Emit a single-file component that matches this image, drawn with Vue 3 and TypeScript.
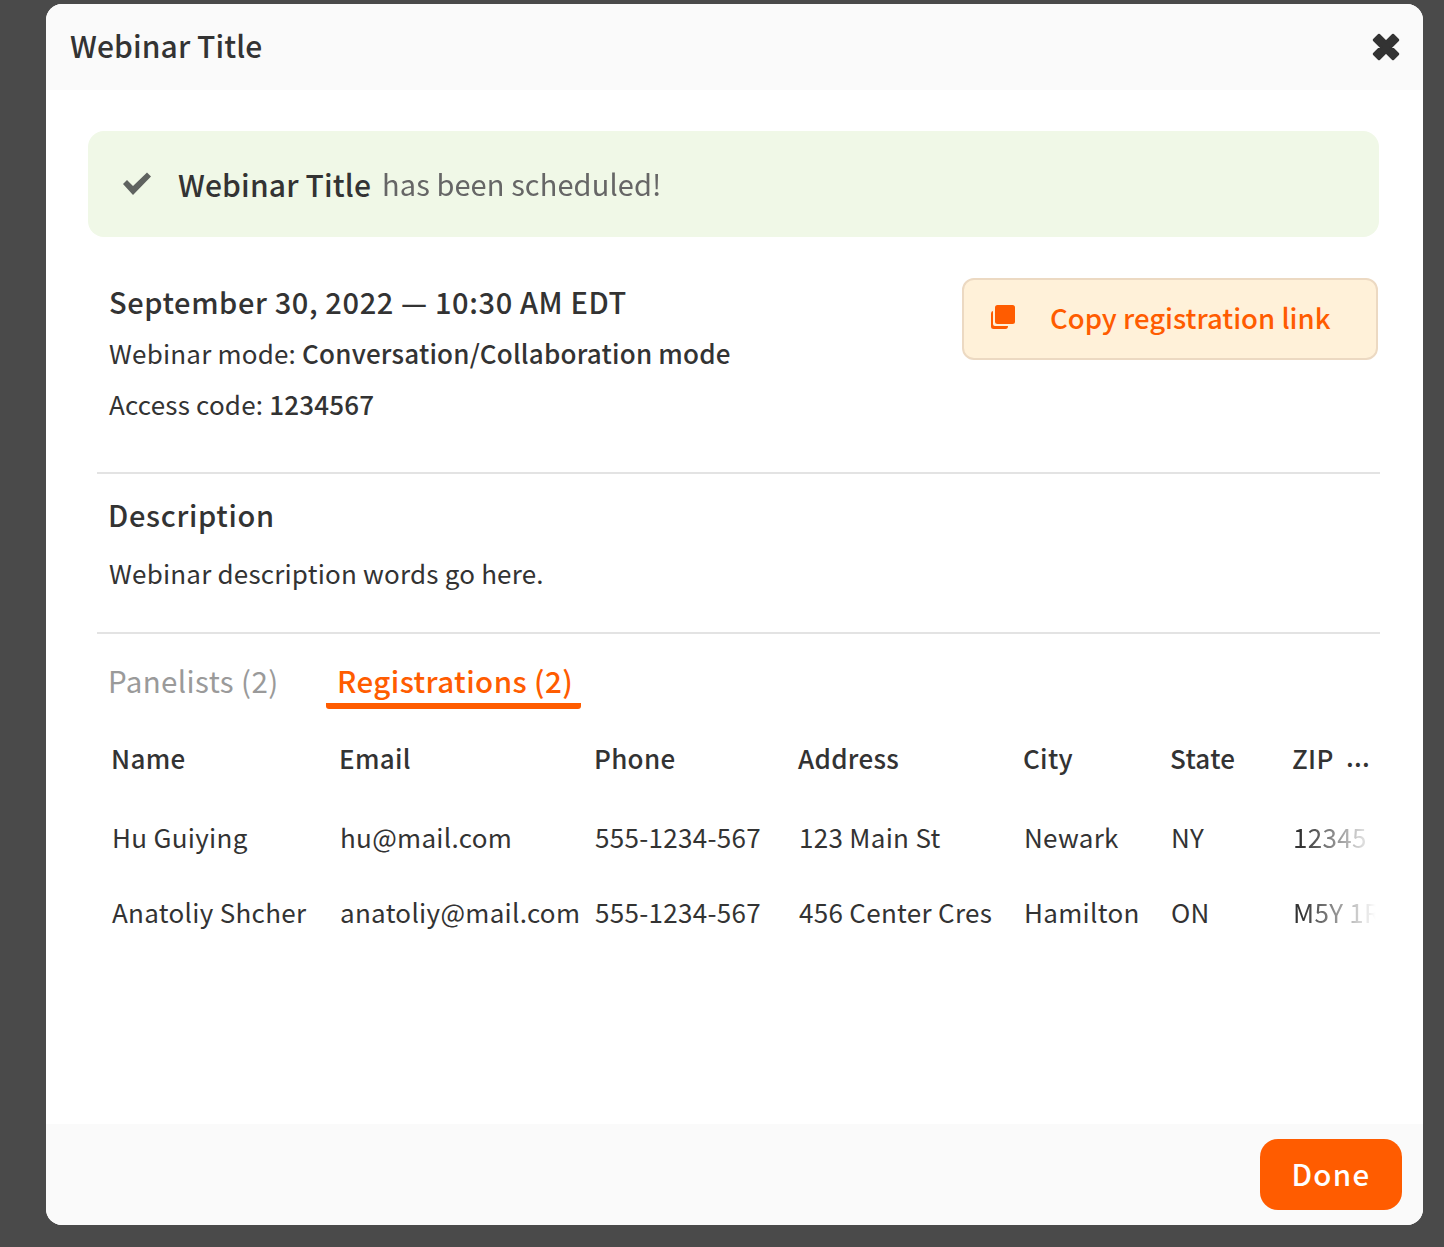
<template>
  <div class="page">
    <div class="modal">
      <header class="modal-head">
        <h1>Webinar Title</h1>
        <button class="close" aria-label="Close">
          <svg width="30" height="30" viewBox="0 0 30 30">
            <path d="M3 8 8 3 15 10 22 3 27 8 20 15 27 22 22 27 15 20 8 27 3 22 10 15Z" fill="#333" stroke="#333" stroke-width="2.5" stroke-linejoin="round" />
          </svg>
        </button>
      </header>

      <main class="modal-body">
        <div class="banner">
          <svg class="check" width="30" height="24" viewBox="0 0 30 24">
            <path d="M1 12 5 8l6 6L25 .5 29 4.500 11 23Z" fill="#5f6360" />
          </svg>
          <strong>Webinar Title</strong>
          <span>has been scheduled!</span>
        </div>

        <section class="info">
          <div class="info-text">
            <h2>September 30, 2022 — 10:30 AM EDT</h2>
            <p>Webinar mode: <b>Conversation/Collaboration mode</b></p>
            <p>Access code: <b>1234567</b></p>
          </div>
          <button class="copy-btn">
            <svg width="26" height="26" viewBox="0 0 26 26">
              <path d="M2 9.500Q2 7 4 7V20Q4 22 6 22H19Q19 25 16.500 25H4.500Q2 25 2 22.500Z" fill="#ff5c00" />
              <rect x="6" y="1" width="20" height="19" rx="2.500" fill="#ff5c00" />
            </svg>
            <span>Copy registration link</span>
          </button>
        </section>

        <section class="desc">
          <h3>Description</h3>
          <p>Webinar description words go here.</p>
        </section>

        <section class="reg">
          <div class="tabs">
            <span class="tab">Panelists (2)</span>
            <span class="tab active">Registrations (2)</span>
          </div>
          <div class="grid head">
            <span v-for="h in headers" :key="h">{{ h }}</span>
            <span class="more">...</span>
          </div>
          <div v-for="r in rows" :key="r.email" class="grid row">
            <span>{{ r.name }}</span>
            <span>{{ r.email }}</span>
            <span>{{ r.phone }}</span>
            <span>{{ r.address }}</span>
            <span>{{ r.city }}</span>
            <span>{{ r.state }}</span>
            <span class="zip">{{ r.zip }}</span>
          </div>
        </section>
      </main>

      <footer class="modal-foot">
        <button class="done">Done</button>
      </footer>
    </div>
  </div>
</template>

<script setup lang="ts">
const headers = ['Name', 'Email', 'Phone', 'Address', 'City', 'State', 'ZIP']

const rows = [
  { name: 'Hu Guiying', email: 'hu@mail.com', phone: '555-1234-567', address: '123 Main St', city: 'Newark', state: 'NY', zip: '12345' },
  { name: 'Anatoliy Shcher', email: 'anatoliy@mail.com', phone: '555-1234-567', address: '456 Center Cres', city: 'Hamilton', state: 'ON', zip: 'M5Y 1R' },
]
</script>

<style>
html, body {
  margin: 0;
  background: #4a4a4a;
}
</style>

<style scoped>
.page {
  height: 1247px;
  padding: 4px 0 0 46px;
  box-sizing: border-box;
  overflow: hidden;
  font-family: "Noto Sans CJK JP", "Noto Sans CJK SC", sans-serif;
  color: #333;
}
.modal {
  width: 1377px;
  height: 1221px;
  display: flex;
  flex-direction: column;
  background: #fff;
  border-radius: 16px;
  overflow: hidden;
}
.modal-head {
  height: 86px;
  flex-shrink: 0;
  display: flex;
  align-items: center;
  justify-content: space-between;
  padding: 0 22px 0 24px;
  box-sizing: border-box;
  background: #fafafa;
}
.modal-head h1 {
  margin: -4px 0 0;
  font-size: 30px;
  font-weight: 500;
  letter-spacing: 0.1px;
}
.close {
  display: flex;
  padding: 0;
  border: none;
  background: none;
}
.modal-body {
  flex: 1;
  padding: 41px 44px 0 42px;
}
.banner {
  height: 106px;
  display: flex;
  align-items: center;
  padding-left: 34px;
  background: #f0f8e7;
  border-radius: 16px;
}
.check {
  margin-right: 26px;
}
.banner strong {
  font-size: 30px;
  font-weight: 500;
  letter-spacing: 0.15px;
  margin-right: 11px;
}
.banner span {
  font-size: 29px;
  color: #666;
  letter-spacing: 0.1px;
  margin-top: -2px;
  filter: blur(0.6px);
}
.info {
  display: flex;
  justify-content: space-between;
  align-items: flex-start;
  margin: 39px 1px 0 21px;
}
.info h2 {
  margin: 0;
  height: 51px;
  line-height: 50px;
  font-size: 29px;
  font-weight: 500;
  letter-spacing: 0.62px;
}
.info p {
  margin: 0;
  height: 51px;
  line-height: 51px;
  font-size: 26px;
  letter-spacing: 0.2px;
}
.info b {
  font-weight: 500;
}
.copy-btn {
  width: 416px;
  height: 82px;
  margin-top: 2px;
  display: flex;
  align-items: center;
  gap: 35px;
  padding: 0 0 4px 25px;
  box-sizing: border-box;
  background: #fff1d9;
  border: 2px solid #ecd9c2;
  border-radius: 12px;
  font: inherit;
  font-size: 27.500px;
  font-weight: 500;
  color: #ff5c00;
}
.desc {
  margin: 43px -1px 0 9px;
  height: 162px;
  box-sizing: border-box;
  padding: 15px 12px 0;
  border-top: 2px solid #e3e3e3;
  border-bottom: 2px solid #e3e3e3;
}
.desc h3 {
  margin: 0 0 0 -1px;
  font-size: 29px;
  font-weight: 500;
  line-height: 50px;
  letter-spacing: 0.7px;
}
.desc p {
  margin: 9px 0 0;
  font-size: 26px;
  line-height: 50px;
  letter-spacing: 0.2px;
}
.tabs {
  display: flex;
  margin: 0 0 0 20px;
  height: 75px;
}
.tab {
  line-height: 92px;
  height: 75px;
  font-size: 29.500px;
  color: #9a9a9a;
  letter-spacing: 0.4px;
}
.tab.active {
  margin-left: 47.500px;
  padding: 0 7.500px 0 11px;
  color: #ff5c00;
  font-weight: 500;
  border-bottom: 6px solid #ff5c00;
  border-radius: 0 0 3px 3px;
  box-sizing: border-box;
}
.grid {
  display: grid;
  grid-template-columns: 228px 255px 204px 225px 147px 122px 1fr;
  margin-left: 23px;
  width: 1268px;
  font-size: 26px;
  letter-spacing: 0.3px;
}
.grid > span {
  white-space: nowrap;
}
.head {
  margin-top: 24px;
  height: 50px;
  line-height: 50px;
  font-weight: 500;
  position: relative;
}
.more {
  position: absolute;
  left: 1235px;
  top: -2px;
}
.row {
  height: 75px;
  line-height: 75px;
  padding-left: 1px;
  box-sizing: border-box;
}
.head + .row {
  margin-top: 16px;
}
.zip {
  width: 87px;
  -webkit-mask-image: linear-gradient(to right, #000 10%, transparent 95%);
  mask-image: linear-gradient(to right, #000 10%, transparent 95%);
}
.modal-foot {
  height: 101px;
  flex-shrink: 0;
  display: flex;
  justify-content: flex-end;
  align-items: flex-start;
  padding: 15px 21px 0 0;
  box-sizing: border-box;
  background: #fafafa;
}
.done {
  width: 142px;
  height: 71px;
  padding: 0 0 4px;
  border: none;
  border-radius: 18px;
  background: #ff5c00;
  color: #fff;
  font: inherit;
  font-size: 29.500px;
  font-weight: 500;
  letter-spacing: 1.300px;
}
</style>
